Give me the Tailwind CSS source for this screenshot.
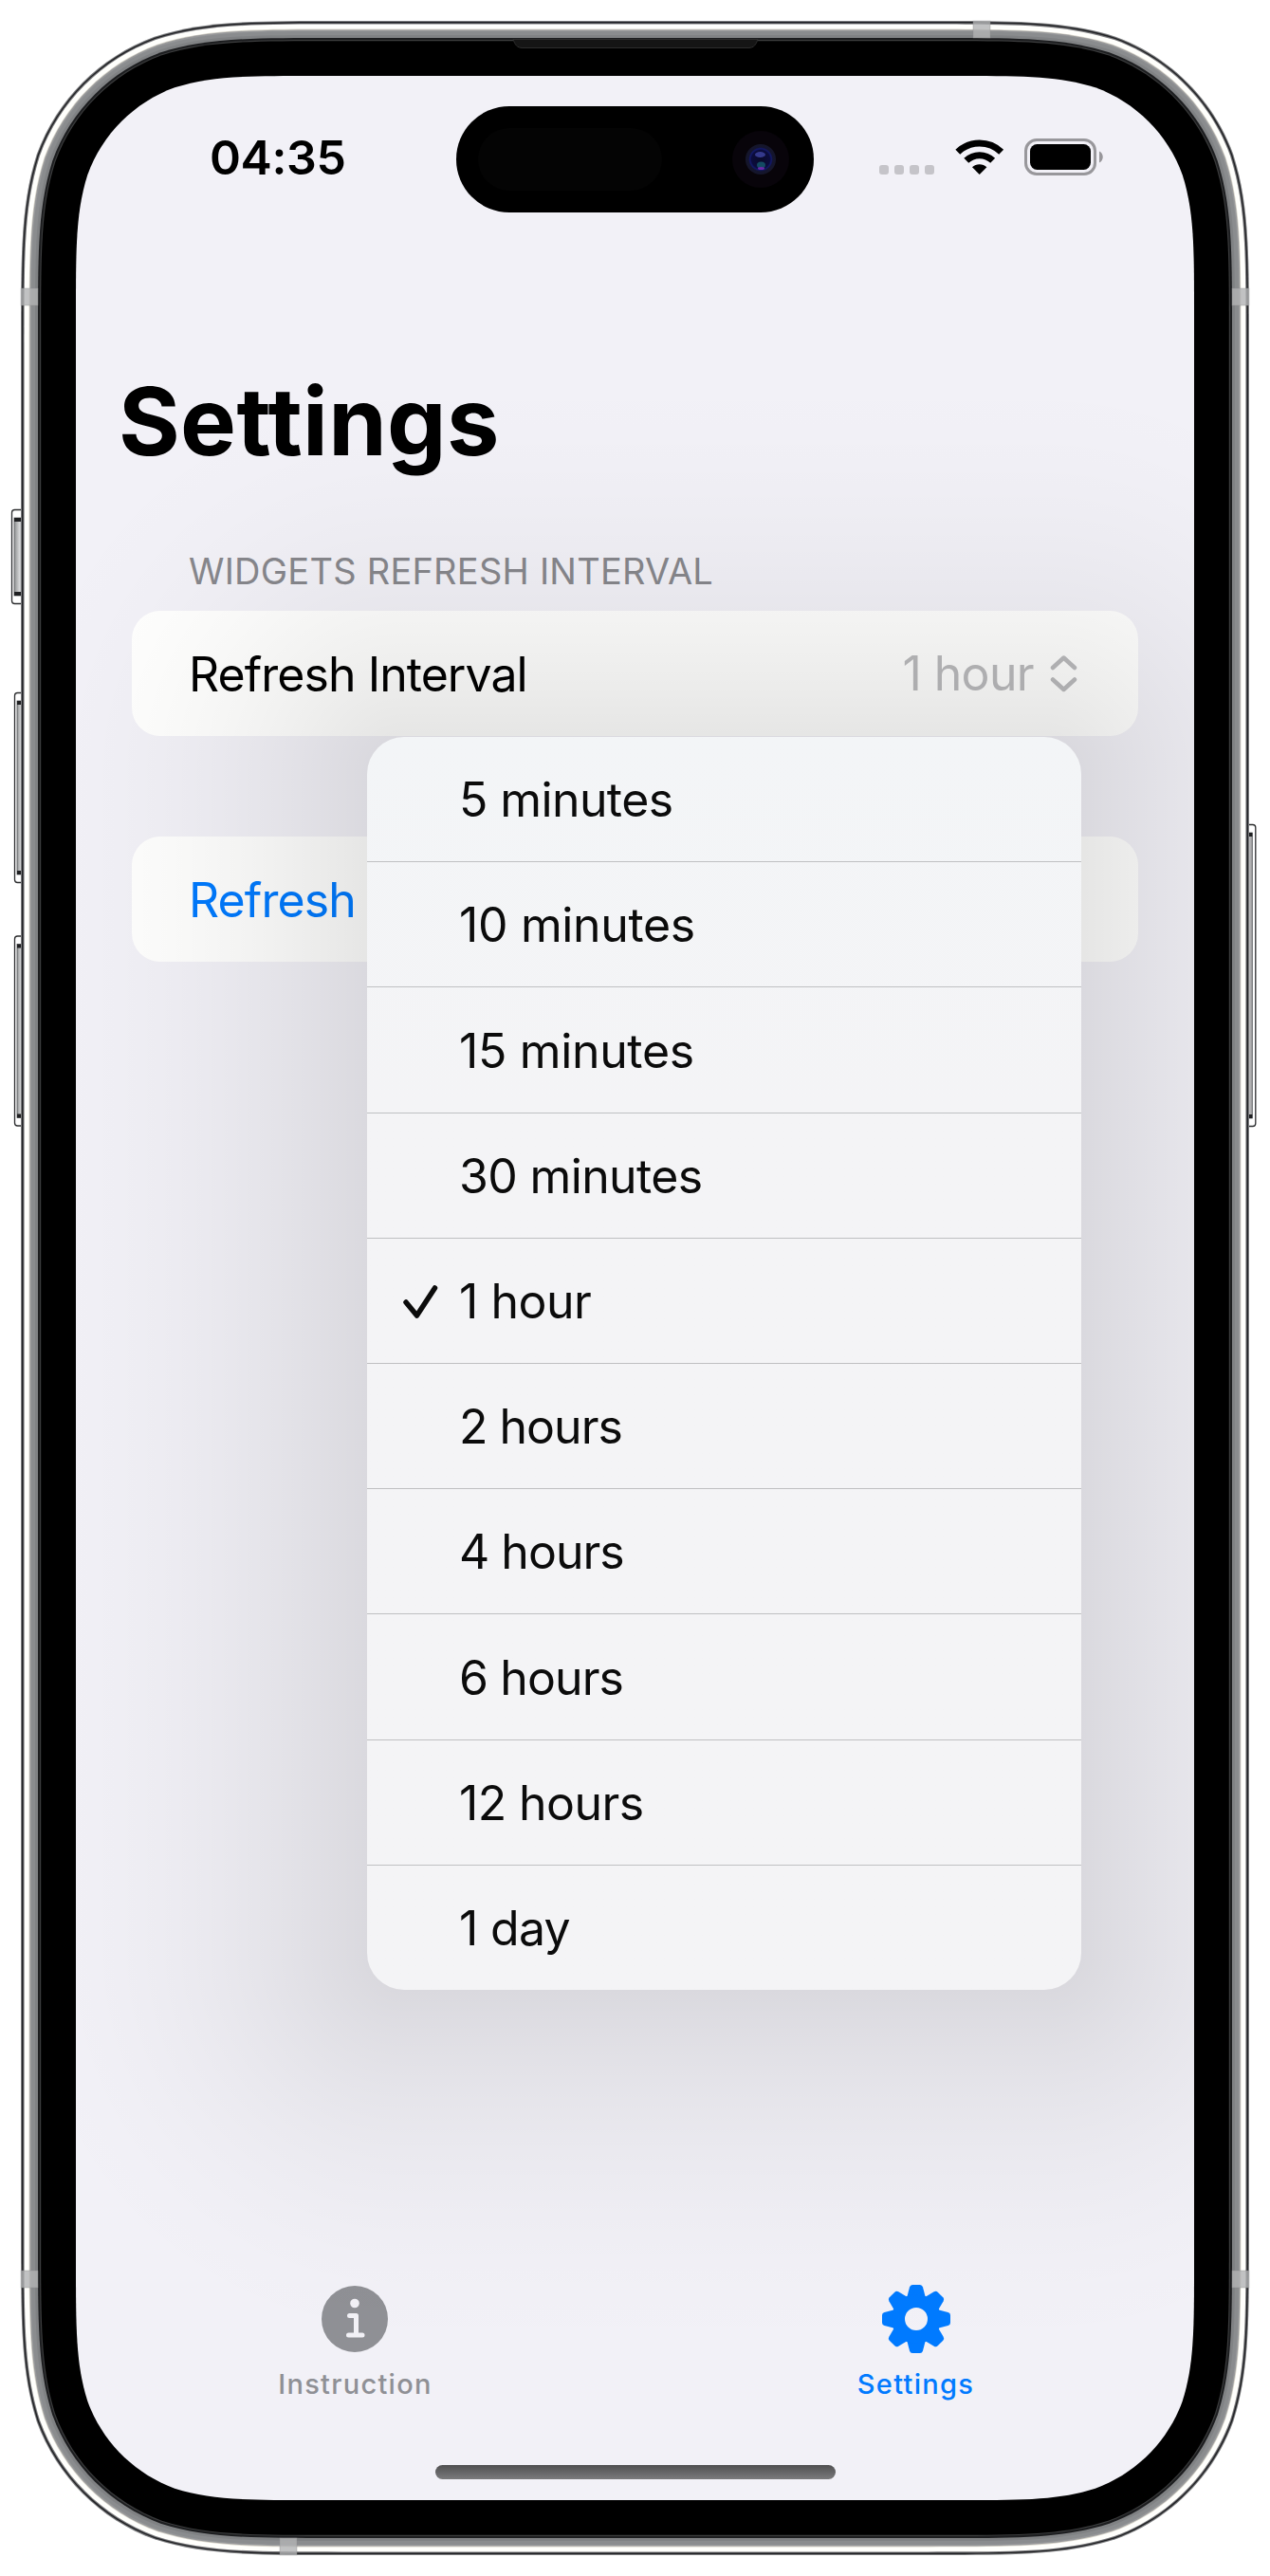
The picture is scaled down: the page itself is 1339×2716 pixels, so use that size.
<!DOCTYPE html>
<html lang="en">
<head>
<meta charset="utf-8">
<title>Settings</title>
<script src="https://cdn.jsdelivr.net/npm/@tailwindcss/browser@4"></script>
</head>
<body class="bg-white">
<div class="relative w-[1339px] h-[2716px] overflow-hidden font-['Inter',sans-serif]">
  <svg class="absolute inset-0" width="1339" height="2716" viewBox="0 0 1339 2716">
    <defs>
      <linearGradient id="btn" x1="0" y1="0" x2="1" y2="0"><stop offset="0" stop-color="#8f9192"/><stop offset=".5" stop-color="#d5d6d7"/><stop offset="1" stop-color="#85878a"/></linearGradient>
      <linearGradient id="btnR" x1="0" y1="0" x2="1" y2="0"><stop offset="0" stop-color="#8f9192"/><stop offset=".5" stop-color="#c5c5c7"/><stop offset="1" stop-color="#9a9a9b"/></linearGradient>
      <radialGradient id="lens"><stop offset="0" stop-color="#0a0a2a"/><stop offset=".6" stop-color="#0b0c3c"/><stop offset=".7" stop-color="#12186a"/><stop offset=".8" stop-color="#14152e"/><stop offset="1" stop-color="#15162a"/></radialGradient>
    </defs>
    <g id="buttons"></g>
    <g id="layers"></g>
    <g id="bands"></g>
    <path d="M541 41.500H799C797 47 795 50.500 789 50.500H551C545 50.500 543 47 541 41.500Z" fill="#151515" stroke="#2e2e2e" stroke-width="1"/>
  </svg>

  <main class="relative m-20 w-[1179px] h-[2556px] rounded-[165px] overflow-hidden flex flex-col">
    <header class="h-[178px] shrink-0 flex items-start">
      <div class="w-[401px] pt-[55px] pl-[141px] text-[50px] leading-[62px] font-semibold tracking-[-0.4px]">04:35</div>
      <div class="mt-8 w-[377px] h-28 rounded-full bg-black flex items-center justify-between pl-[23px] pr-[26px]">
        <div class="w-[194px] h-[66px] rounded-full bg-[#040404]"></div>
        <svg width="60" height="60" viewBox="0 0 60 60"><circle cx="30" cy="30" r="30" fill="#08040a"/><circle cx="30" cy="30" r="16" fill="url(#lens)"/><ellipse cx="29.500" cy="25" rx="5.500" ry="3" fill="#34398c"/><ellipse cx="30.500" cy="36" rx="4.500" ry="3.500" fill="#134a62"/><ellipse cx="30.500" cy="39.500" rx="3.500" ry="1.500" fill="#6a28a8"/></svg>
      </div>
      <svg class="mt-[62px] ml-[66px]" width="242" height="46" viewBox="924 142 242 46">
        <g fill="#c5c4c9"><rect x="927" y="174" width="10" height="10" rx="3"/><rect x="943" y="174" width="10" height="10" rx="3"/><rect x="959" y="174" width="10" height="10" rx="3"/><rect x="975" y="174" width="10" height="10" rx="3"/></g>
        <g fill="none" stroke="#000" stroke-width="7"><path d="M1009.800 160.200A33 33 0 0 1 1055.700 160.200"/><path d="M1018.800 169.300A20 20 0 0 1 1046.700 169.300"/></g>
        <path d="M1032.700 184L1025 176.300A11 11 0 0 1 1040.400 176.300Z"/>
        <rect x="1081.500" y="147.500" width="73" height="36" rx="11.500" fill="none" stroke="#98979b" stroke-width="3"/>
        <rect x="1086" y="152" width="64" height="27" rx="7.500"/>
        <path d="M1159 159.500C1164 161.500 1164 169.500 1159 171.500Z" fill="#98979b"/>
      </svg>
    </header>

    <h1 class="mt-[126px] ml-[45px] shrink-0 text-[99px] leading-[120px] font-bold tracking-[0.3px]">Settings</h1>
    <h2 class="mt-[74px] ml-[119px] shrink-0 h-12 text-[38px] leading-[48px] tracking-[0.23px] text-[#87878c] whitespace-nowrap">WIDGETS REFRESH INTERVAL</h2>

    <section class="relative mt-[18px] mx-[59px] shrink-0">
      <div class="h-33 rounded-[30px] bg-[#fffffe] flex items-center justify-between pl-[60px] pr-[64px] text-[50px]">
        <span class="pt-[2px] tracking-[-0.95px]">Refresh Interval</span>
        <span class="flex items-center gap-[17px] text-[#bbbbbd]"><span class="tracking-[-0.65px]">1 hour</span>
          <svg width="29" height="42" viewBox="0 0 29 42" fill="none" stroke="currentColor" stroke-width="4.500" stroke-linecap="round" stroke-linejoin="round"><path d="M3 15L14.500 4.500L26 15M3 27.500L14.500 38L26 27.500"/></svg>
        </span>
      </div>
      <div class="mt-[106px] h-33 rounded-[30px] bg-[#fffffe] flex items-center pl-[60px] text-[50px] text-[#007aff]">
        <span class="pt-[2px] tracking-[-0.9px]">Refresh</span>
      </div>

      <svg id="shade" class="absolute -left-[59px] -top-[564px]" width="1179" height="2556" viewBox="0 0 1179 2556" shape-rendering="crispEdges"></svg>
      <ul id="menu" class="absolute left-[248px] top-[133px] w-[753px] h-[1321px] rounded-[39px] bg-linear-to-b from-[#f3f5f7] via-[#f4f4f6] via-30% to-[#f4f4f6] flex flex-col text-[50px] text-[#0b0b0b]"></ul>
    </section>

    <nav class="mt-auto h-[220px] shrink-0 flex justify-center text-[29px] leading-[36px] font-medium tracking-[1.28px]">
      <a class="w-[592px] shrink-0 flex flex-col items-center gap-[13px] pt-[28px] text-[#8f9095]">
        <svg width="76" height="76" viewBox="0 0 76 76"><circle cx="38" cy="38" r="35" fill="currentColor"/><circle cx="38" cy="21.500" r="4.800" fill="#f2f1f6"/><path d="M32.500 34.500H39.500V55M31.500 55H46" fill="none" stroke="#f2f1f6" stroke-width="5" stroke-linecap="round" stroke-linejoin="round"/></svg>
        <span class="pl-[2px]">Instruction</span>
      </a>
      <a class="w-[592px] shrink-0 flex flex-col items-center gap-[13px] pt-[28px] text-[#007aff]">
        <svg id="gear" width="76" height="76" viewBox="-38 -38 76 76" fill="currentColor"></svg>
        <span>Settings</span>
      </a>
    </nav>
    <div class="mx-auto mb-[22px] w-[422px] h-[15px] shrink-0 rounded-full bg-linear-to-b from-[#505051] to-[#7b7b7d]"></div>
  </main>
</div>
<script>
  // Menu rows
  const items = [
    ['5 minutes', 'tracking-[-0.6px]'], ['10 minutes', 'tracking-[-0.35px]'], ['15 minutes', 'tracking-[-0.35px]'],
    ['30 minutes', 'tracking-[-0.65px]'], ['1 hour', 'tracking-[-0.5px]'], ['2 hours', 'tracking-[-1px]'],
    ['4 hours', 'tracking-[-1px]'], ['6 hours', 'tracking-[-0.9px]'], ['12 hours', 'tracking-[-0.6px]'], ['1 day', 'tracking-[-0.7px]'],
  ];
  document.getElementById('menu').innerHTML = items.map(([t, tracking], i) =>
    `<li class="flex-1 flex items-center pl-[36px] ${i ? 'border-t border-[#bfc0c2]' : ''}">
      <svg class="w-[40px] h-[40px] mr-[21px]" viewBox="423 1351.500 40 40" fill="none" stroke="currentColor" stroke-width="5.500" stroke-linecap="round" stroke-linejoin="round">${t === '1 hour' ? '<path d="M428 1373.500L439.500 1387.500L458.500 1358.500"/>' : ''}</svg>
      <span class="pt-[2px] ${tracking}">${t}</span></li>`).join('');

  // Menu shadow: falls off with the distance to the menu's rounded edge, drawn as four sides and four corners
  const reach = 420, rad = 39, full = reach + rad;
  const stops = Array.from({length: 31}, (_, i) =>
    `<stop offset="${((rad + reach * i / 30) / full).toFixed(4)}" stop-opacity="${(0.1 * (1 - i / 30) ** 2.1).toFixed(4)}"/>`).join('');
  const L = 346, R = 1021, T = 736, B = 1979;
  const lin = (id, x1, y1, x2, y2) => `<linearGradient id="${id}" gradientUnits="userSpaceOnUse" x1="${x1}" y1="${y1}" x2="${x2}" y2="${y2}">${stops}</linearGradient>`;
  const radial = (id, cx, cy) => `<radialGradient id="${id}" gradientUnits="userSpaceOnUse" cx="${cx}" cy="${cy}" r="${full}">${stops}</radialGradient>`;
  const box = (id, x, y, w, h) => `<rect x="${x}" y="${y}" width="${w}" height="${h}" fill="url(#${id})"/>`;
  document.getElementById('shade').innerHTML =
    lin('sl', L, 0, L - full, 0) + lin('sr', R, 0, R + full, 0) + lin('st', 0, T, 0, T - full) + lin('sb', 0, B, 0, B + full) +
    radial('tl', L, T) + radial('tr', R, T) + radial('bl', L, B) + radial('br', R, B) +
    box('sl', 0, T, L, B - T) + box('sr', R, T, 1179 - R, B - T) + box('st', L, 0, R - L, T) + box('sb', L, B, R - L, 2556 - B) +
    box('tl', 0, 0, L, T) + box('tr', R, 0, 1179 - R, T) + box('bl', 0, B, L, 2556 - B) + box('br', R, B, 1179 - R, 2556 - B);

  // Continuous-corner rounded rectangle, inset by d from the outer edge of the case
  function shape(d) {
    const x0 = 22 + d, y0 = 22 + d, x1 = 1317 - d, y1 = 2694 - d, r = 223 - d;
    const pts = [[1.5287,0],[1.0885,0],[.8684,0],[.6315,.0749],[.3728,.1691],[.1691,.3728],[.0749,.6315],[0,.8684],[0,1.0885],[0,1.5287]];
    const tl = pts.map(p => [x0 + p[0]*r, y0 + p[1]*r]);
    const bl = pts.map(p => [x0 + p[0]*r, y1 - p[1]*r]).reverse();
    const br = pts.map(p => [x1 - p[0]*r, y1 - p[1]*r]);
    const tr = pts.map(p => [x1 - p[0]*r, y0 + p[1]*r]).reverse();
    const seg = (c, first) => `${first ? 'M' : 'L'}${c[0]} C${c[1]} ${c[2]} ${c[3]} C${c[4]} ${c[5]} ${c[6]} C${c[7]} ${c[8]} ${c[9]}`;
    return seg(tl, true) + seg(bl) + seg(br) + seg(tr) + 'Z';
  }
  const layers = [[0,'#7b7c7e'],[1,'#212225'],[2.5,'#77777a'],[3.6,'#fffffc'],[8.6,'#d6d3c8'],[9.4,'#97989a'],[11,'#8a8c8e'],[15,'#808284'],[18,'#1c1d1f'],[20,'#3b3c3d'],[21.2,'#000'],[58,'#f2f1f7']];
  document.getElementById('layers').innerHTML = layers.map(([d, c]) => `<path d="${shape(d)}" fill="${c}"/>`).join('');

  // Side buttons
  const btn = (x, y, h, w, right) => {
    const f = right ? 'btnR' : 'btn', ix = right ? x : x + 3;
    return `<rect x="${x+.5}" y="${y+.5}" width="${w}" height="${h-1}" rx="3" fill="#fff" stroke="#2b2c2e" stroke-width="1.300"/>
    <rect x="${ix}" y="${y+9}" width="${w-3}" height="${h-18}" fill="url(#${f})" stroke="#55575a" stroke-width=".8"/>
    <rect x="${ix}" y="${y+9}" width="${w-3}" height="4" fill="#1e1f21"/><rect x="${ix}" y="${y+h-13}" width="${w-3}" height="4" fill="#1e1f21"/>`;
  };
  document.getElementById('buttons').innerHTML = btn(12,537,100,14) + btn(15,730,201,11) + btn(15,986.5,201,11) + btn(1313,869,319,10.3,true);

  // Antenna bands
  const bands = [[22,304,18,18],[1299,304,18,18],[22,2394,18,18],[1299,2394,18,18],[1026,22,18,18],[295,2676,18,18]];
  document.getElementById('bands').innerHTML = bands.map(([x,y,w,h]) => `<rect x="${x}" y="${y}" width="${w}" height="${h}" fill="#b2b3b4" fill-opacity=".8" stroke="#8d8e90" stroke-opacity=".6" stroke-width=".6"/>`).join('');

  // Gear: eight tapered teeth around a hub
  let teeth = '';
  for (let a = 0; a < 360; a += 45) teeth += `<path transform="rotate(${a})" d="M-10.5-20L-7-33.500Q-6.300-36-4-36H4Q6.300-36 7-33.500L10.500-20Z"/>`;
  document.getElementById('gear').innerHTML = teeth + '<path fill-rule="evenodd" d="M-26 0a26 26 0 1 0 52 0a26 26 0 1 0-52 0ZM-12 0a12 12 0 1 0 24 0a12 12 0 1 0-24 0Z"/>';
</script>
</body>
</html>
